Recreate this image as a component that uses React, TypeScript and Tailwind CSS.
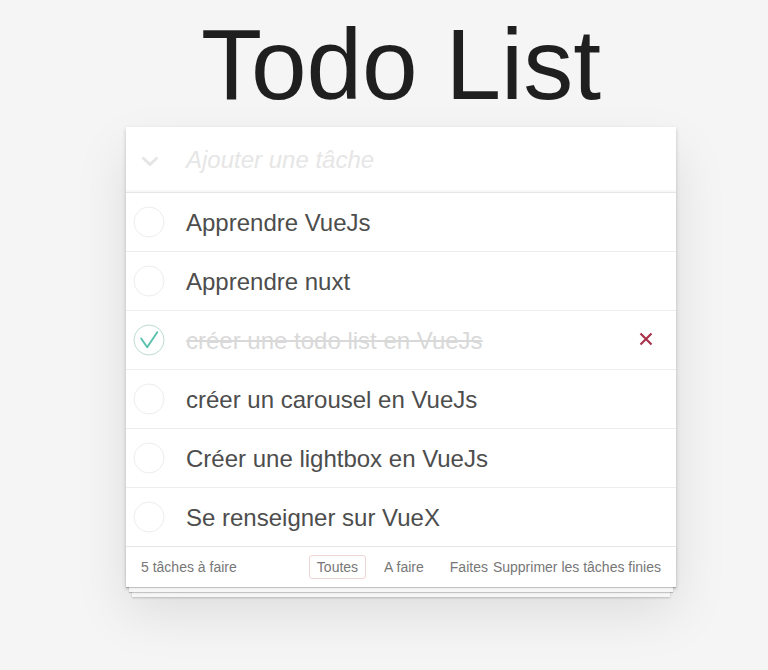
import React from "react";

const todos = [
  { text: "Apprendre VueJs", done: false },
  { text: "Apprendre nuxt", done: false },
  { text: "créer une todo list en VueJs", done: true },
  { text: "créer un carousel en VueJs", done: false },
  { text: "Créer une lightbox en VueJs", done: false },
  { text: "Se renseigner sur VueX", done: false },
];

function Circle({ done }: { done: boolean }) {
  return (
    <svg width="32" height="32" viewBox="0 0 32 32" className="shrink-0">
      <circle cx="16" cy="16" r="15" fill="none" stroke={done ? "#bddad5" : "#ededed"} strokeWidth="1" />
      {done && (
        <path d="M8.2 14.5 L14.2 23.2 L24.2 8.2" fill="none" stroke="#5dc2af" strokeWidth="2" strokeLinecap="round" strokeLinejoin="round" />
      )}
    </svg>
  );
}

export default function App() {
  return (
    <div
      className="min-h-[670px] bg-[#f5f5f5] text-[#4d4d4d]"
      style={{ fontFamily: '"Liberation Sans", Arial, sans-serif' }}
    >
      <div className="ml-[126px] w-[550px]">
        <h1 className="pt-[14px] text-center text-[100px] leading-[100px] font-normal text-[#1f1f1f]">
          Todo List
        </h1>
        <div className="mt-[13px] bg-white shadow-[0_2px_4px_0_rgba(0,0,0,0.2),0_25px_50px_0_rgba(0,0,0,0.1)]">
          <div className="flex h-[65px] items-center shadow-[inset_0_-2px_1px_rgba(0,0,0,0.03)]">
            <div className="flex w-[60px] justify-start pl-[15px] pt-[2px]">
              <svg width="18" height="10" viewBox="0 0 18 10">
                <path d="M1.5 1.5 L9 8.5 L16.5 1.5" fill="none" stroke="#e6e6e6" strokeWidth="3" />
              </svg>
            </div>
            <span className="text-[24px] italic font-light text-[#e6e6e6]">Ajouter une tâche</span>
          </div>
          <ul className="border-t border-[#e6e6e6]">
            {todos.map((t, i) => (
              <li
                key={i}
                className={`flex h-[58px] items-center ${i < todos.length - 1 ? "border-b border-[#ededed] box-content" : ""}`}
              >
                <div className="flex w-[60px] pl-[7px]">
                  <Circle done={t.done} />
                </div>
                <span
                  className={`flex-1 text-[24px] leading-[29px] ${t.done ? "text-[#d9d9d9] line-through" : "text-[#4d4d4d]"}`}
                >
                  {t.text}
                </span>
                {t.done && (
                  <div className="mr-[10px] flex w-[40px] items-center justify-center pb-[3px]">
                    <svg width="14" height="14" viewBox="0 0 14 14">
                      <path d="M1.5 1.5 L12.5 12.5 M12.5 1.5 L1.5 12.5" stroke="#a8324a" strokeWidth="2.2" />
                    </svg>
                  </div>
                )}
              </li>
            ))}
          </ul>
          <div className="flex h-[41px] items-center border-t border-[#e6e6e6] bg-white px-[15px] text-[14px] text-[#777] shadow-[0_1px_1px_rgba(0,0,0,0.2),0_8px_0_-3px_#f6f6f6,0_9px_1px_-3px_rgba(0,0,0,0.2),0_16px_0_-6px_#f6f6f6,0_17px_2px_-6px_rgba(0,0,0,0.2)]">
            <span className="flex-1">5 tâches à faire</span>
            <div className="flex items-center gap-[10px]">
              <span className="rounded-[3px] border border-[rgba(175,47,47,0.2)] px-[7px] py-[3px] leading-[16px]">Toutes</span>
              <span className="rounded-[3px] border border-transparent px-[7px] py-[3px] leading-[16px]">A faire</span>
              <span className="rounded-[3px] border border-transparent px-[7px] py-[3px] leading-[16px]">Faites</span>
            </div>
            <span className="-ml-[3px] leading-[16px]">Supprimer les tâches finies</span>
          </div>
        </div>
      </div>
    </div>
  );
}
